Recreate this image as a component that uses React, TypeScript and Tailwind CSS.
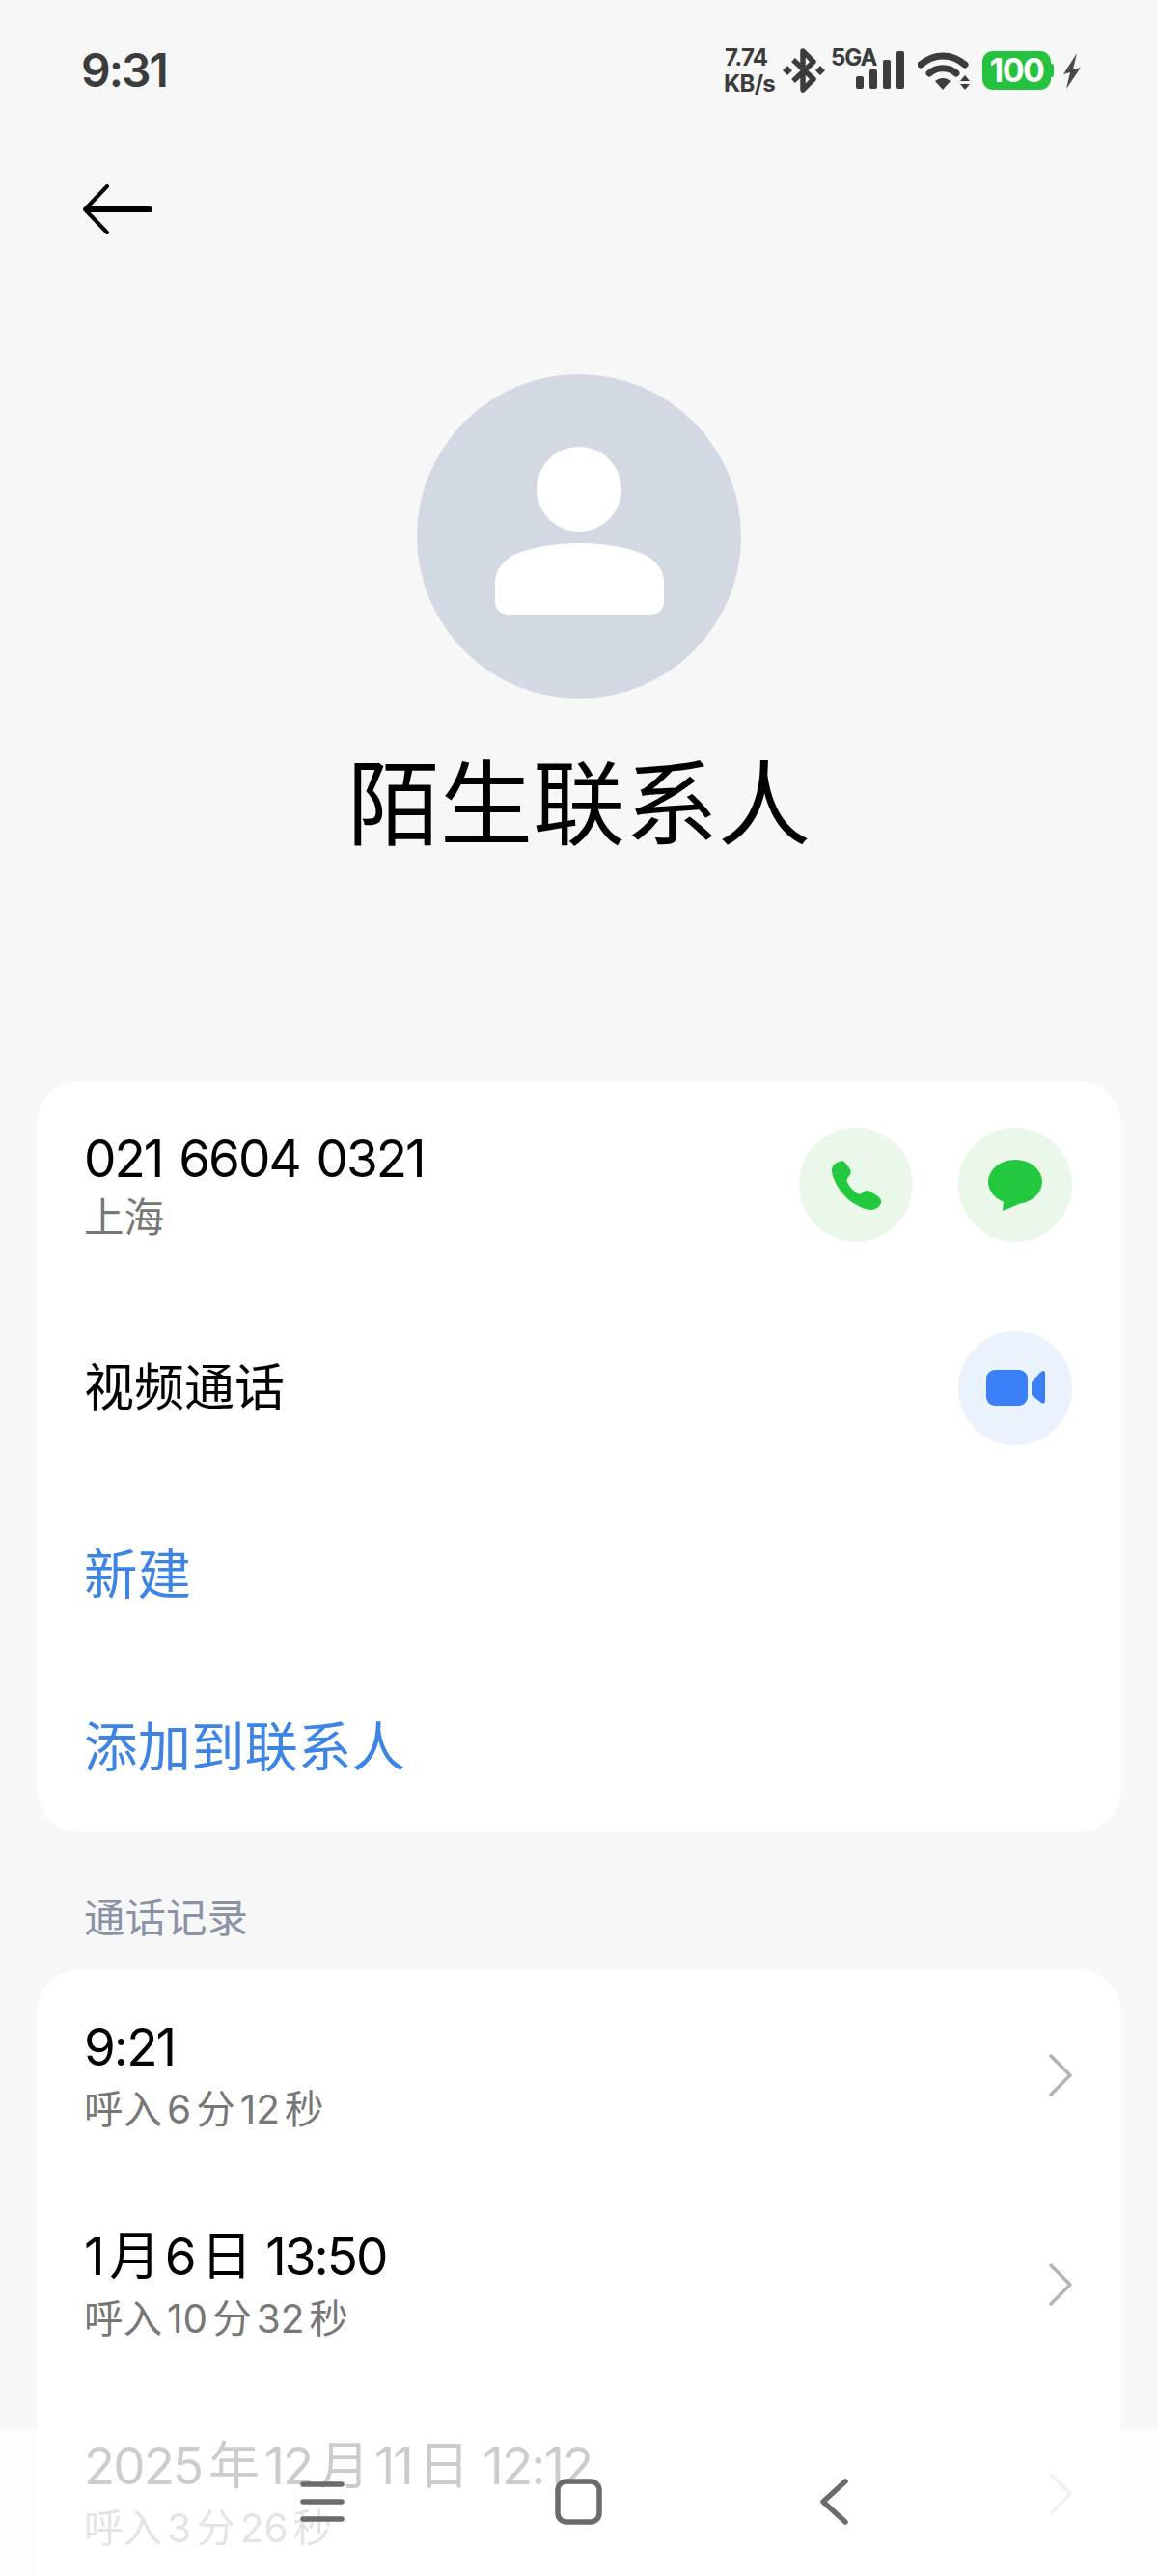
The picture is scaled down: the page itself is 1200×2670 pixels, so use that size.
const cjk = "font-['Inter','Noto_Sans_CJK_SC',sans-serif]";

function StatusIcons() {
  return (
    <div className="flex items-center h-full text-[#3c3c3c] font-['Inter',sans-serif] font-bold">
      <div className="flex flex-col w-[60px] text-[24px] leading-[27px] tracking-[-0.7px]">
        <span className="pl-[1px]">7.74</span>
        <span>KB/s</span>
      </div>
      <svg width="44" height="46" viewBox="0 0 44 46" className="ml-[1px]">
        <polyline points="11,12 32,32 21,43 21,3 32,14 11,34" fill="none" stroke="#3c3c3c" strokeWidth="5.5" strokeLinejoin="round" />
        <path d="M0 23l5-5 5 5-5 5zM34 23l5-5 5 5-5 5z" fill="#3c3c3c" />
      </svg>
      <span className="ml-[6px] mb-[26px] text-[24px] leading-[20px] tracking-[-1px] w-[48px]">5GA</span>
      <svg width="50" height="39" viewBox="0 0 50 39" className="ml-[-22px] mt-[-1px]">
        <rect x="0" y="26" width="8" height="13" rx="2" fill="#3c3c3c" />
        <rect x="14" y="19" width="8" height="20" rx="2" fill="#3c3c3c" />
        <rect x="28" y="9" width="8" height="30" rx="2" fill="#3c3c3c" />
        <rect x="42" y="0" width="8" height="39" rx="2" fill="#3c3c3c" />
      </svg>
      <svg width="54" height="39" viewBox="0 0 54 39" className="ml-[14px]">
        <path d="M3 13 C17 1 35 1 49 13" fill="none" stroke="#3c3c3c" strokeWidth="7" strokeLinecap="round" />
        <path d="M12 22 C20 15 32 15 40 22" fill="none" stroke="#3c3c3c" strokeWidth="7" strokeLinecap="round" />
        <path d="M18 30 C23 26 29 26 34 30 L26 39 Z" fill="#3c3c3c" />
        <path d="M44 30l5-6 5 6zM44 33h10l-5 6z" fill="#3c3c3c" />
      </svg>
      <div className="ml-[13px] flex items-center">
        <div className="w-[71px] h-[40px] rounded-[11px] bg-[#24c23f] flex items-center justify-center text-white text-[34px] leading-none font-bold tracking-[-1.5px]">100</div>
        <div className="w-[3px] h-[14px] bg-[#24c23f] rounded-r-[2px]" />
      </div>
      <svg width="18" height="37" viewBox="0 0 18 37" className="ml-[10px]">
        <path d="M14 0 L0 22 L7 20 L3 37 L18 15 L10 17 Z" fill="#4a4a4a" />
      </svg>
    </div>
  );
}

function Chevron({ className = "" }: { className?: string }) {
  return (
    <svg width="26" height="44" viewBox="0 0 26 44" className={className}>
      <polyline points="3,2 23,22 3,42" fill="none" stroke="#b3b3b3" strokeWidth="3.5" strokeLinecap="round" strokeLinejoin="round" />
    </svg>
  );
}

function CallRow({ title, sub }: { title: string; sub: string }) {
  return (
    <div className="flex items-center justify-between h-[217px] pl-[49px] pr-[50px]">
      <div className="flex flex-col">
        <span className="text-[53px] leading-[72px] tracking-[-2px] [word-spacing:3px] text-black [text-autospace:normal]">{title}</span>
        <span className="text-[40.5px] leading-[58px] text-[#777777] [text-autospace:normal]">{sub}</span>
      </div>
      <Chevron />
    </div>
  );
}

function Circle({ tone, children }: { tone: string; children: React.ReactNode }) {
  return <div className={`w-[118px] h-[118px] rounded-full flex items-center justify-center ${tone}`}>{children}</div>;
}

export default function App() {
  return (
    <div className={`relative w-[1200px] h-[2670px] overflow-hidden bg-[#f7f7f8] ${cjk}`}>
      <div className="flex items-center justify-between h-[146px] pl-[84px] pr-[80px]">
        <span className="text-[48px] font-semibold text-[#3c3c3c] tracking-[-2px] font-['Inter',sans-serif]">9:31</span>
        <StatusIcons />
      </div>

      <div className="flex items-center h-[142px] pl-[85px]">
        <svg width="72" height="52" viewBox="0 0 72 52">
          <path d="M26 2 L3 26 L26 50" fill="none" stroke="#000" strokeWidth="4" strokeLinecap="round" strokeLinejoin="round" />
          <path d="M5 26 H70" fill="none" stroke="#000" strokeWidth="6" strokeLinecap="round" />
        </svg>
      </div>

      <div className="flex justify-center mt-[100px]">
        <div className="w-[336px] h-[336px] rounded-full bg-[#d3d9e2] flex flex-col items-center pt-[75px]">
          <div className="w-[88px] h-[88px] rounded-full bg-white" />
          <svg width="175" height="74" viewBox="0 0 175 74" className="mt-[12px]">
            <path d="M87.5 0 C115 0 150 6 163 17 C172 25 175 32 175 42 L175 60 C175 69 169 74 160 74 L15 74 C6 74 0 69 0 60 L0 42 C0 32 3 25 12 17 C25 6 60 0 87.5 0 Z" fill="#fff" />
          </svg>
        </div>
      </div>

      <h1 className="mt-[55px] text-center text-[96px] leading-[108px] font-normal text-black">陌生联系人</h1>

      <div className="mt-[234px] mx-[38px] h-[778px] bg-white rounded-[44px] flex flex-col">
        <div className="flex items-center justify-between h-[214px] pl-[49px] pr-[51px]">
          <div className="flex flex-col">
            <span className="text-[53px] leading-[68px] tracking-[-2px] [word-spacing:4px] text-black">021 6604 0321</span>
            <span className="text-[41.5px] leading-[54px] text-[#777777]">上海</span>
          </div>
          <div className="flex gap-[47px]">
            <Circle tone="bg-[#eaf8ea]">
              <svg width="51" height="51" viewBox="0 0 51 51">
                <path d="M8 1 C3 2 0 5 0 11 C1 20 8 32 18 41 C26 47 35 51 41 51 C46 51 50 47 51 44 C52 41 50 39 48 37 L40 32 C37 30 34 31 32 33 C30 35 27 35 25 33 C21 30 17 25 16 22 C15 20 16 18 18 16 C20 14 20 11 19 9 L14 2 C12 0 10 0 8 1 Z" fill="#22c93f" />
              </svg>
            </Circle>
            <Circle tone="bg-[#eaf8ea]">
              <svg width="56" height="53" viewBox="0 0 56 53">
                <ellipse cx="28" cy="23" rx="28" ry="23" fill="#22c93f" />
                <path d="M16 42 L15 53 L32 46 Z" fill="#22c93f" />
              </svg>
            </Circle>
          </div>
        </div>
        <div className="flex items-center justify-between h-[207px] pl-[49px] pr-[51px]">
          <span className="text-[52px] text-black">视频通话</span>
          <Circle tone="bg-[#eaf2fe]">
            <svg width="61" height="37" viewBox="0 0 61 37">
              <rect x="0" y="0" width="43" height="37" rx="9" fill="#3a7ff6" />
              <path d="M47 12 L57 2 Q61 -1 61 4 L61 31 Q61 36 57 34 L47 26 Z" fill="#3a7ff6" />
            </svg>
          </Circle>
        </div>
        <div className="flex items-center h-[180px] pl-[49px]">
          <span className="text-[55.5px] text-[#3d84e4]">新建</span>
        </div>
        <div className="flex items-center h-[177px] pl-[49px]">
          <span className="text-[55.5px] text-[#3d84e4]">添加到联系人</span>
        </div>
      </div>

      <div className="flex items-end h-[143px] pb-[29px] pl-[87px]">
        <span className="text-[42.5px] leading-[50px] text-[#8a92a6]">通话记录</span>
      </div>

      <div className="mx-[38px] bg-white rounded-[44px] h-[800px]">
        <CallRow title="9:21" sub="呼入6分12秒" />
        <CallRow title="1月6日 13:50" sub="呼入10分32秒" />
        <CallRow title="2025年12月11日 12:12" sub="呼入3分26秒" />
      </div>

      <div className="absolute left-0 right-0 bottom-0 h-[152px] bg-white/80">
        <svg width="1200" height="152" viewBox="0 0 1200 152">
          <path d="M314 57 H354 M314 75 H354 M314 93 H354" stroke="#6b6b6b" strokeWidth="5.5" strokeLinecap="round" />
          <rect x="578" y="54" width="43" height="42" rx="9" fill="none" stroke="#6b6b6b" strokeWidth="5.5" />
          <polyline points="876,54 853,75 876,96" fill="none" stroke="#6b6b6b" strokeWidth="5.5" strokeLinecap="round" strokeLinejoin="round" />
        </svg>
      </div>
    </div>
  );
}
